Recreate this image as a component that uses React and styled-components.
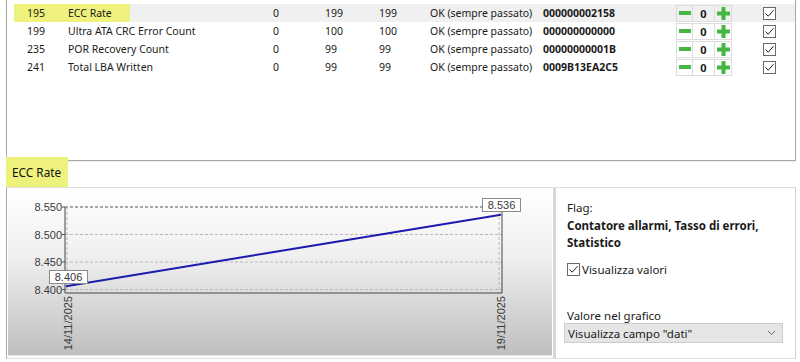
import React from 'react'
import styled, { createGlobalStyle } from 'styled-components'

const GlobalStyle = createGlobalStyle`
	html, body {
		margin: 0;
		padding: 0;
		background: #ffffff;
	}
	body {
		font-family: 'Noto Sans', 'Open Sans', sans-serif;
		font-size: 10.5px;
		color: #1a1a1a;
	}
`

const Page = styled.div`
	width: 800px;
	height: 362px;
	overflow: hidden;
	background: #ffffff;
`

const ListPanel = styled.div`
	margin-left: 6px;
	width: 781px;
	height: 156px;
	padding: 4px 0 0 7px;
	border: 1px solid #a8a8a8;
	border-top: none;
	box-shadow: 0 1px 1px rgba(0, 0, 0, 0.08);
`

const Row = styled.div`
	display: grid;
	grid-template-columns: 54px 205px 52px 54px 51px 113px 134px 86px 1fr;
	align-items: center;
	height: 18px;
	background: ${({selected}) => (selected ? '#f0f0f0' : 'transparent')};
	white-space: nowrap;
`

const IdCell = styled.div`
	height: 100%;
	display: flex;
	align-items: center;
	padding-left: 13px;
	background: ${({selected}) => (selected ? '#eef27c' : 'transparent')};
`

const NameCell = styled.div`
	height: 100%;
	display: flex;
	align-items: center;
`

const NameLabel = styled.span`
	height: 100%;
	display: flex;
	align-items: center;
	padding-right: 18px;
	background: ${({selected}) => (selected ? '#eef27c' : 'transparent')};
`

const Cell = styled.div``

const RawCell = styled.div`
	font-weight: 700;
`

const Stepper = styled.div`
	display: flex;
	height: 17px;
`

const StepBox = styled.div`
	width: ${({w}) => w}px;
	height: 100%;
	box-sizing: border-box;
	border: 1px solid #dcdcdc;
	margin-left: -1px;
	display: flex;
	align-items: center;
	justify-content: center;
	font-weight: 700;
	font-size: 11px;
`

const CheckBox = styled.div`
	width: 13px;
	height: 13px;
	box-sizing: border-box;
	border: 1px solid #6a6a6a;
	background: #ffffff;
	display: flex;
	align-items: center;
	justify-content: center;
`

const DetailSection = styled.div`
	margin-left: 6px;
	width: 790px;
`

const Tab = styled.div`
	position: relative;
	margin-top: -4px;
	width: 62px;
	height: 30px;
	box-sizing: border-box;
	padding-left: 6px;
	display: flex;
	align-items: center;
	background: #eef27c;
	font-size: 11.8px;
	white-space: nowrap;
	color: #111;
`

const DetailPanel = styled.div`
	display: flex;
	height: 170px;
	border-top: 1px solid #dedede;
	border-left: 1px solid #a8a8a8;
	border-right: 1px solid #d0d0d0;
	border-bottom: 1px solid #e2e2e2;
`

const ChartBox = styled.div`
	width: 544px;
	height: 165px;
	margin: 2px 0 0 1px;
	background: linear-gradient(#ffffff 0%, #f0f0f0 40%, #bfbfbf 100%);
	border-bottom: 1px solid #e8e8e8;
`

const SidePanel = styled.div`
	flex: 1;
	margin-left: 1px;
	padding: 11px 12px 0 11px;
	border-left: 3px solid #d6d6d6;
	display: flex;
	flex-direction: column;
	font-size: 11.5px;
	line-height: 17px;
`

const FlagText = styled.div`
	font-weight: 700;
	margin-top: 1px;
`

const CheckLine = styled.label`
	display: flex;
	align-items: center;
	gap: 2px;
	margin-top: 10px;
`

const FieldLabel = styled.div`
	margin-top: 29px;
`

const Select = styled.div`
	margin: -1px 0 0 -3px;
	height: 20px;
	box-sizing: border-box;
	border: 1px solid #cccccc;
	background: #e5e5e5;
	display: flex;
	align-items: center;
	justify-content: space-between;
	padding: 0 6px 0 3px;
`

const rows = [
	{id: '195', name: 'ECC Rate', cur: '0', worst: '199', thr: '199', raw: '000000002158', selected: true},
	{id: '199', name: 'Ultra ATA CRC Error Count', cur: '0', worst: '100', thr: '100', raw: '000000000000'},
	{id: '235', name: 'POR Recovery Count', cur: '0', worst: '99', thr: '99', raw: '00000000001B'},
	{id: '241', name: 'Total LBA Written', cur: '0', worst: '99', thr: '99', raw: '0009B13EA2C5'},
]

function Check() {
	return (
		<svg width="11" height="11" viewBox="0 0 11 11">
			<path d="M1.5 5.5 L4.2 8.2 L9.5 2.2" fill="none" stroke="#222" strokeWidth="1" />
		</svg>
	)
}

function MinusIcon() {
	return (
		<svg width="12" height="6" viewBox="0 0 12 6">
			<rect x="0" y="1" width="12" height="4" fill="#45b545" />
		</svg>
	)
}

function PlusIcon() {
	return (
		<svg width="13" height="13" viewBox="0 0 13 13">
			<path d="M4.5 0 H8.5 V4.5 H13 V8.5 H8.5 V13 H4.5 V8.5 H0 V4.5 H4.5 Z" fill="#45b545" />
		</svg>
	)
}

function AttributeRow({row}) {
	return (
		<Row selected={row.selected}>
			<IdCell selected={row.selected}>{row.id}</IdCell>
			<NameCell>
				<NameLabel selected={row.selected}>{row.name}</NameLabel>
			</NameCell>
			<Cell>{row.cur}</Cell>
			<Cell>{row.worst}</Cell>
			<Cell>{row.thr}</Cell>
			<Cell>OK (sempre passato)</Cell>
			<RawCell>{row.raw}</RawCell>
			<Stepper>
				<StepBox w={17}><MinusIcon /></StepBox>
				<StepBox w={23}>0</StepBox>
				<StepBox w={18}><PlusIcon /></StepBox>
			</Stepper>
			<CheckBox><Check /></CheckBox>
		</Row>
	)
}

const yOf = v => 17 + ((8.55 - v) / 0.05) * 27.5

function Chart() {
	const L = 57
	const R = 494
	const T = 17
	const B = 103
	const ticks = [8.55, 8.5, 8.45, 8.4]
	const x1 = 58
	const x2 = 493
	const y1 = yOf(8.406)
	const y2 = yOf(8.536)
	const font = {fontFamily: "'Liberation Sans', Arial, sans-serif", fontSize: 11, fill: '#3a3a3a'}
	return (
		<svg width="544" height="165" viewBox="0 0 544 165">
			{ticks.map((t, i) => (
				<g key={t}>
					<line
						x1={L}
						x2={R}
						y1={yOf(t)}
						y2={yOf(t)}
						stroke={i === 0 ? '#555' : '#b8b8b8'}
						strokeDasharray="3 2"
					/>
					<line x1={L - 3} x2={L} y1={yOf(t)} y2={yOf(t)} stroke="#555" />
					<text x={L - 3} y={yOf(t) + 4} textAnchor="end" {...font}>
						{t.toFixed(3)}
					</text>
				</g>
			))}
			<line x1={59} x2={59} y1={T} y2={B} stroke="#b8b8b8" strokeDasharray="3 2" />
			<line x1={491} x2={491} y1={T} y2={B} stroke="#b8b8b8" strokeDasharray="3 2" />
			<line x1={L} x2={L} y1={T} y2={B} stroke="#444" />
			<line x1={R} x2={R} y1={T} y2={B} stroke="#444" />
			<line x1={L} x2={R} y1={B} y2={B} stroke="#444" />
			<line x1={x1} y1={y1} x2={x2} y2={y2} stroke="#1c1cae" strokeWidth="2" />
			<rect x="41.5" y="80.5" width="38" height="13" fill="#fff" stroke="#8a8a8a" />
			<text x="60.5" y="91" textAnchor="middle" {...font}>8.406</text>
			<rect x="474.5" y="8.5" width="38" height="13" fill="#fff" stroke="#8a8a8a" />
			<text x="493.5" y="19" textAnchor="middle" {...font}>8.536</text>
			<text transform="translate(64 106) rotate(-90)" textAnchor="end" {...font}>14/11/2025</text>
			<text transform="translate(497 106) rotate(-90)" textAnchor="end" {...font}>19/11/2025</text>
		</svg>
	)
}

function Chevron() {
	return (
		<svg width="9" height="6" viewBox="0 0 9 6">
			<path d="M1 1 L4.5 4.5 L8 1" fill="none" stroke="#666" strokeWidth="1" />
		</svg>
	)
}

function App() {
	return (
		<Page>
			<GlobalStyle />
			<ListPanel>
				{rows.map(row => (
					<AttributeRow key={row.id} row={row} />
				))}
			</ListPanel>
			<DetailSection>
				<Tab>ECC Rate</Tab>
				<DetailPanel>
					<ChartBox>
						<Chart />
					</ChartBox>
					<SidePanel>
						<div>Flag:</div>
						<FlagText>
							Contatore allarmi, Tasso di errori,
							<br />
							Statistico
						</FlagText>
						<CheckLine>
							<CheckBox><Check /></CheckBox>
							Visualizza valori
						</CheckLine>
						<FieldLabel>Valore nel grafico</FieldLabel>
						<Select>
							<span>Visualizza campo "dati"</span>
							<Chevron />
						</Select>
					</SidePanel>
				</DetailPanel>
			</DetailSection>
		</Page>
	)
}

export default App
